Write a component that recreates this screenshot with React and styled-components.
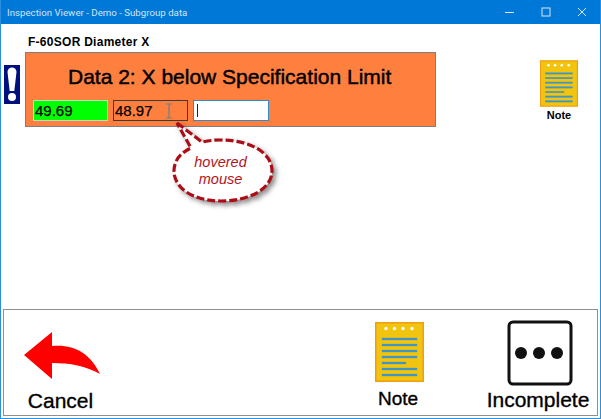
import styled, { createGlobalStyle } from 'styled-components';

const GlobalStyle = createGlobalStyle`
	html, body {
		margin: 0;
		padding: 0;
		background: #fff;
	}
`;

const Window = styled.div`
	position: relative;
	box-sizing: border-box;
	width: 601px;
	height: 419px;
	overflow: hidden;

	display: flex;
	flex-direction: column;

	border: 1px solid #2a8fe0;
	border-top: 0;
	background: #fff;
	color: #000;
	font-family: 'Liberation Sans', Arial, sans-serif;
`;

const TitleBar = styled.div`
	flex: none;
	height: 24px;
	margin: 0 -1px;
	padding: 0 1px 0 7px;

	display: flex;
	align-items: center;
	justify-content: space-between;

	background: #0078d7;
	color: #cfe6f8;
	font-family: Roboto, sans-serif;
	font-size: 9.7px;
`;

const WindowButtons = styled.div`
	display: flex;
	align-items: center;
	height: 100%;
`;

const WindowButton = styled.div`
	width: 36px;
	height: 100%;

	display: flex;
	align-items: center;
	justify-content: center;
`;

const Content = styled.main`
	flex: 1;
	padding: 11px 0 0 3px;
`;

const PartLabel = styled.div`
	margin-left: 24px;
	height: 17px;
	line-height: 14px;
	font-size: 12px;
	font-weight: 700;
	letter-spacing: 0.27px;
`;

const InspectRow = styled.div`
	display: flex;
	align-items: flex-start;
`;

const AlertBadge = styled.div`
	flex: none;
	width: 16px;
	height: 39px;
	margin-top: 13px;
	margin-right: 5px;
	background: #00107e;
`;

const AlertPanel = styled.section`
	box-sizing: border-box;
	flex: none;
	width: 411px;
	height: 75px;
	padding-top: 11px;

	display: flex;
	flex-direction: column;

	border: 1px solid #7f7f7f;
	background: #ff7f3f;
`;

const AlertTitle = styled.h1`
	margin: 0 0 0 42px;
	height: 36px;
	line-height: 25px;
	font-size: 21px;
	font-weight: 400;
	-webkit-text-stroke: 0.45px #000;
	white-space: nowrap;
`;

const Fields = styled.div`
	display: flex;
	gap: 5px;
	margin-left: 7px;
`;

const Field = styled.div`
	position: relative;
	box-sizing: border-box;
	width: ${({ $wide }) => ($wide ? 76 : 75)}px;
	height: 21px;
	padding-left: 1px;

	display: flex;
	align-items: center;

	border: 1px solid ${({ $border }) => $border};
	background: ${({ $bg }) => $bg};
	font-size: 15px;
	-webkit-text-stroke: 0.25px #000;
`;

const Caret = styled.span`
	width: 1px;
	height: 13px;
	margin-left: 2px;
	background: #222;
`;

const IBeam = styled.svg`
	position: absolute;
	right: 14px;
	top: 2px;
`;

const SideNote = styled.div`
	flex: none;
	width: 38px;
	margin-top: 8px;
	margin-left: 104px;

	display: flex;
	flex-direction: column;
	align-items: center;
`;

const SideNoteLabel = styled.span`
	margin-top: 2px;
	line-height: 13px;
	font-size: 11px;
	font-weight: 700;
`;

const Callout = styled.div`
	position: absolute;
	left: 165px;
	top: 115px;
	width: 115px;
	height: 90px;
`;

const CalloutText = styled.div`
	position: absolute;
	left: -1px;
	top: 39px;
	width: 111px;
	text-align: center;
	color: #b5121b;
	font-size: 14.5px;
	font-style: italic;
	line-height: 17px;
`;

const Toolbar = styled.footer`
	box-sizing: border-box;
	flex: none;
	height: 107px;
	margin: 0 2px 2px 2px;

	display: flex;

	border: 1px solid #8f8f8f;
`;

const ToolButton = styled.div`
	flex: none;
	width: ${({ $width }) => $width}px;
	margin-left: ${({ $left }) => $left}px;
	padding-top: ${({ $top }) => $top}px;

	display: flex;
	flex-direction: column;
	align-items: center;
`;

const ToolLabel = styled.span`
	position: relative;
	top: ${({ $shift }) => $shift || 0}px;
	margin-right: ${({ $nudge }) => $nudge || 0}px;
	line-height: 23px;
	font-size: ${({ $size }) => $size}px;
	font-weight: 400;
	-webkit-text-stroke: 0.35px #000;
	white-space: nowrap;
`;

const LINES_Y = [13, 19, 25, 31, 37, 43, 49];

const NoteIcon = ({ width, height }) => (
	<svg width={width} height={height} viewBox="0 0 49 60" style={{ display: 'block' }}>
		<rect x="0.75" y="0.75" width="47.5" height="58.5" fill="#f1c40f" stroke="#f39c12" strokeWidth="1.5" />
		{[11, 19.5, 28, 37].map((x) => (
			<circle key={x} cx={x} cy="6.5" r="1.7" fill="#fff" />
		))}
		{LINES_Y.map((y, i) => (
			<rect key={y} x="7" y={y + 3} width={i === 4 ? 24 : 35} height="2" fill="#3498db" stroke="#6c8f7a" strokeWidth="0.3" />
		))}
	</svg>
);

const App = () => (
	<>
		<GlobalStyle />
		<Window>
			<TitleBar>
				<span>Inspection Viewer - Demo - Subgroup data</span>
				<WindowButtons>
					<WindowButton>
						<svg width="10" height="10" viewBox="0 0 10 10"><path d="M0 5.5h9" stroke="#d5e9f9" fill="none" /></svg>
					</WindowButton>
					<WindowButton>
						<svg width="10" height="10" viewBox="0 0 10 10"><rect x="1" y="1" width="8" height="8" stroke="#d5e9f9" fill="none" /></svg>
					</WindowButton>
					<WindowButton>
						<svg width="10" height="10" viewBox="0 0 10 10"><path d="M1 1l8 8M9 1l-8 8" stroke="#d5e9f9" fill="none" /></svg>
					</WindowButton>
				</WindowButtons>
			</TitleBar>

			<Content>
				<PartLabel>F-60SOR Diameter X</PartLabel>
				<InspectRow>
					<AlertBadge>
						<svg width="16" height="39" viewBox="0 0 16 39" style={{ display: 'block' }}>
							<path d="M3.5 7a4.5 4.5 0 0 1 9 0l-2.2 19h-4.6z" fill="#fff" />
							<circle cx="8" cy="32" r="4" fill="#fff" />
						</svg>
					</AlertBadge>
					<AlertPanel>
						<AlertTitle>Data 2: X below Specification Limit</AlertTitle>
						<Fields>
							<Field $bg="#00ff00" $border="#c8d8c8">49.69</Field>
							<Field $bg="#ff7f3f" $border="#3c3c3c">
								48.97
								<IBeam width="8" height="16" viewBox="0 0 8 16">
									<path d="M1 1h6M4 1v14M1 15h6" stroke="#6e7f8c" strokeWidth="1.2" fill="none" />
								</IBeam>
							</Field>
							<Field $bg="#fff" $border="#2f8ad0" $wide>
								<Caret />
							</Field>
						</Fields>
					</AlertPanel>
					<SideNote>
						<NoteIcon width={38} height={47} />
						<SideNoteLabel>Note</SideNoteLabel>
					</SideNote>
				</InspectRow>
			</Content>

			<Callout>
				<svg width="115" height="90" viewBox="0 0 115 90" style={{ display: 'block', overflow: 'visible' }}>
					<defs>
						<filter id="calloutShadow" x="-20%" y="-20%" width="150%" height="150%">
							<feDropShadow dx="3" dy="3" stdDeviation="2.5" floodColor="#000" floodOpacity="0.45" />
						</filter>
					</defs>
					<path
						d="M11 8 L36 27 C41 26 47 25 54 25 C85 25 106 38 106 56 C106 74 83 86 55 86 C27 86 8 73 8 56 C8 46 14 38 25 33 Z"
						fill="#fff"
						stroke="#ab0d16"
						strokeWidth="3.2"
						strokeDasharray="8 3"
						filter="url(#calloutShadow)"
					/>
				</svg>
				<CalloutText>hovered<br />mouse</CalloutText>
			</Callout>

			<Toolbar>
				<ToolButton $width={76} $left={20} $top={21}>
					<svg width="76" height="50" viewBox="0 0 76 50" style={{ display: 'block' }}>
						<path d="M0 24 L28 1 V15 C50 13 66 22 76 43 C62 35 46 32 28 32 V48 Z" fill="#ff0000" />
					</svg>
					<ToolLabel $shift={8} $nudge={3} $size={21}>Cancel</ToolLabel>
				</ToolButton>
				<ToolButton $width={60} $left={269} $top={12}>
					<NoteIcon width={49} height={60} />
					<ToolLabel $shift={5} $nudge={2} $size={19}>Note</ToolLabel>
				</ToolButton>
				<ToolButton $width={104} $left={59} $top={10}>
					<svg width="66" height="66" viewBox="0 0 66 66" style={{ display: 'block' }}>
						<rect x="2" y="2" width="62" height="62" rx="4" fill="#fff" stroke="#111" strokeWidth="3" />
						<circle cx="14" cy="33" r="6" fill="#111" />
						<circle cx="32" cy="33" r="6" fill="#111" />
						<circle cx="50" cy="33" r="6" fill="#111" />
					</svg>
					<ToolLabel $shift={2} $nudge={4} $size={21}>Incomplete</ToolLabel>
				</ToolButton>
			</Toolbar>
		</Window>
	</>
);

export default App;
